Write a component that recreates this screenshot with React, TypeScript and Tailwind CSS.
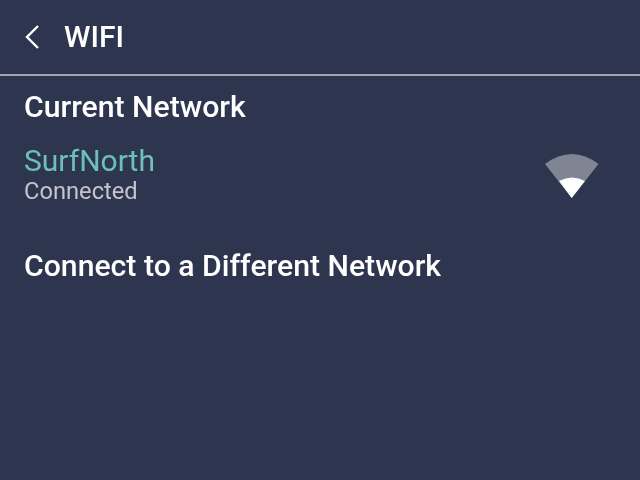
import React from 'react'

const WifiIcon: React.FC = () => (
  <svg width="56" height="46" viewBox="0 0 56 46" className="shrink-0 self-start mt-[9px]">
    <path d="M1 10 Q28 -10 54.5 10 L27.7 44 Z" fill="#808594" />
    <path d="M15 27 Q28 20 41 27 L27.7 44 Z" fill="#ffffff" />
  </svg>
)

const App: React.FC = () => {
  return (
    <div className="w-[640px] h-[480px] bg-[#2e364f] text-white font-['Roboto',sans-serif] overflow-hidden blur-[0.5px]">
      <div className="h-[76px] flex items-center pl-[24px] border-b-2 border-[#a3a6ab]">
        <svg width="16" height="26" viewBox="0 0 16 26" fill="none" className="shrink-0">
          <path d="M14 2 L3 13 L14 24" stroke="#ffffff" strokeWidth="2.4" />
        </svg>
        <span className="ml-[24px] text-[30px] leading-[32px] font-medium">WIFI</span>
      </div>

      <div className="px-[24px]">
        <h2 className="mt-[15px] text-[30.2px] leading-[32px] font-medium">Current Network</h2>

        <div className="mt-[22px] flex items-center justify-between pr-[16px]">
          <div>
            <div className="text-[30px] leading-[32px] text-[#6cc0ba]">SurfNorth</div>
            <div className="mt-[1px] text-[23.7px] leading-[26px] text-[#c3c5cb]">Connected</div>
          </div>
          <WifiIcon />
        </div>

        <h2 className="mt-[46px] text-[30.2px] leading-[32px] font-medium">Connect to a Different Network</h2>
      </div>
    </div>
  )
}

export default App
